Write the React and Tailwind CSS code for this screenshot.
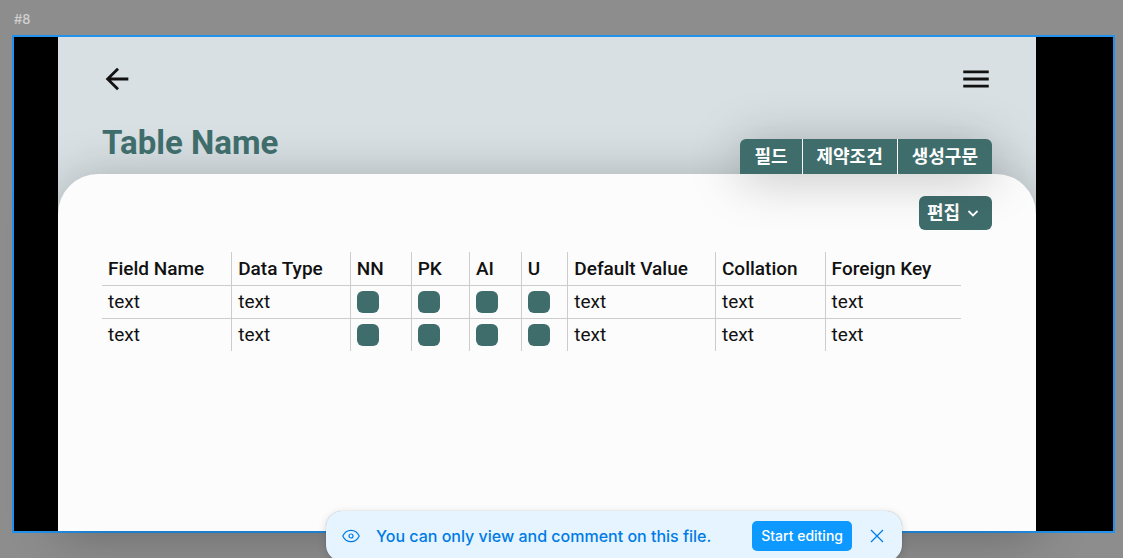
import { MdArrowBack, MdMenu } from "react-icons/md";

const textColumns = new Set(["Field Name", "Data Type", "Default Value", "Collation", "Foreign Key"]);
const columns = ["Field Name", "Data Type", "NN", "PK", "AI", "U", "Default Value", "Collation", "Foreign Key"];
const tabs = ["필드", "제약조건", "생성구문"];

function FieldTable() {
  return (
    <table className="border-collapse text-left text-[19px] leading-8 text-[#111111]">
      <thead>
        <tr className="border-b border-[#cccccc]">
          {columns.map((name) => (
            <th key={name} scope="col" className="h-[33px] border-r border-[#cccccc] pt-px pr-[27px] pb-0 pl-1.5 leading-[31px] font-medium whitespace-nowrap last:border-r-0 last:pr-[30px]">
              {name}
            </th>
          ))}
        </tr>
      </thead>
      <tbody>
        {[1, 2].map((row) => (
          <tr key={row} className="border-b border-[#cccccc] last:border-b-0">
            {columns.map((name) => (
              <td key={name} className="h-[33px] border-r border-[#cccccc] py-0 pr-0 pl-1.5 last:border-r-0">
                {textColumns.has(name) ? (
                  "text"
                ) : (
                  <input
                    type="checkbox"
                    defaultChecked
                    aria-label={`${name} ${row}`}
                    className="block size-[22px] appearance-none rounded-[6px] bg-[#3f6d6c]"
                  />
                )}
              </td>
            ))}
          </tr>
        ))}
      </tbody>
    </table>
  );
}

function Screen() {
  return (
    <main className="flex min-w-0 flex-1 flex-col bg-[#d8e0e3] font-[Roboto,'Noto_Sans_CJK_KR',sans-serif]">
      <header className="flex justify-between pt-[25px] pr-[43px] pl-[42px] text-[34px] text-[#111111]">
        <button type="button" aria-label="Back"><MdArrowBack /></button>
        <button type="button" aria-label="Menu"><MdMenu /></button>
      </header>
      <div className="mt-7 flex items-end justify-between px-11">
        <h1 className="relative z-10 pb-3 text-[33px] leading-[38px] font-bold text-[#3f6d6c]">Table Name</h1>
        <nav className="relative z-10 flex divide-x divide-white rounded-t-[6px] bg-[#3f6d6c] shadow-[0_4px_50px_rgba(0,0,0,0.25)]">
          {tabs.map((tab) => (
            <button key={tab} type="button" className="h-[35px] px-3.5 text-[18px] leading-[35px] font-bold text-white">
              {tab}
            </button>
          ))}
        </nav>
      </div>
      <section className="flex flex-1 flex-col rounded-t-[40px] bg-[#fcfcfc] px-11 pt-[22px] shadow-[0_4px_50px_rgba(0,0,0,0.25)]">
        <button type="button" className="flex h-[34px] items-center gap-1.5 self-end rounded-[6px] bg-[#3f6d6c] pr-3 pl-2 text-[18px] leading-[34px] font-bold text-white">
          편집
          <svg viewBox="0 0 14 14" className="size-3.5" fill="none" stroke="currentColor" strokeWidth="1.8" aria-hidden="true">
            <path d="M2.500 5l4.500 4.500L11.500 5" />
          </svg>
        </button>
        <div className="mt-[22px]">
          <FieldTable />
        </div>
      </section>
    </main>
  );
}

function Notice() {
  return (
    <aside className="absolute top-[511px] left-[326px] flex h-[50px] w-[576px] items-center rounded-2xl bg-[#e5f4ff] pr-[17px] pl-4 text-[#007be5] shadow-[0_0_1px_rgba(0,0,0,0.3),0_2px_8px_rgba(0,0,0,0.15)]">
      <svg viewBox="0 0 18 14" className="h-3.5 w-[18px]" fill="none" stroke="currentColor" strokeWidth="1.2" aria-hidden="true">
        <path d="M.8 7C2.500 3.200 5.400 1.300 9 1.300S15.500 3.200 17.200 7C15.500 10.800 12.600 12.700 9 12.700S2.500 10.800.8 7Z" />
        <circle cx="9" cy="7" r="2" />
      </svg>
      <p className="ml-4 flex-1 text-[16px] leading-6 font-medium whitespace-nowrap">You can only view and comment on this file.</p>
      <button type="button" className="h-[30px] rounded-[5px] bg-[#0d99ff] px-[9px] text-[14px] leading-[30px] font-medium text-white">
        Start editing
      </button>
      <button type="button" aria-label="Close" className="ml-[17px]">
        <svg viewBox="0 0 16 16" className="size-4" fill="none" stroke="currentColor" strokeWidth="1.3" aria-hidden="true">
          <path d="M2 2l12 12M14 2L2 14" />
        </svg>
      </button>
    </aside>
  );
}

export default function App() {
  return (
    <div className="relative flex h-screen flex-col overflow-hidden bg-[#8d8d8d] pr-2 pb-[25px] pl-3 font-[family-name:Inter,sans-serif]">
      <div className="h-[35px] pt-[9px] pl-0.5 text-[13px] leading-5 font-medium text-[#d0d0d0]">#8</div>
      <div className="flex flex-1 border-2 border-[#2492ec] bg-black pr-[77px] pl-11">
        <Screen />
      </div>
      <Notice />
    </div>
  );
}
